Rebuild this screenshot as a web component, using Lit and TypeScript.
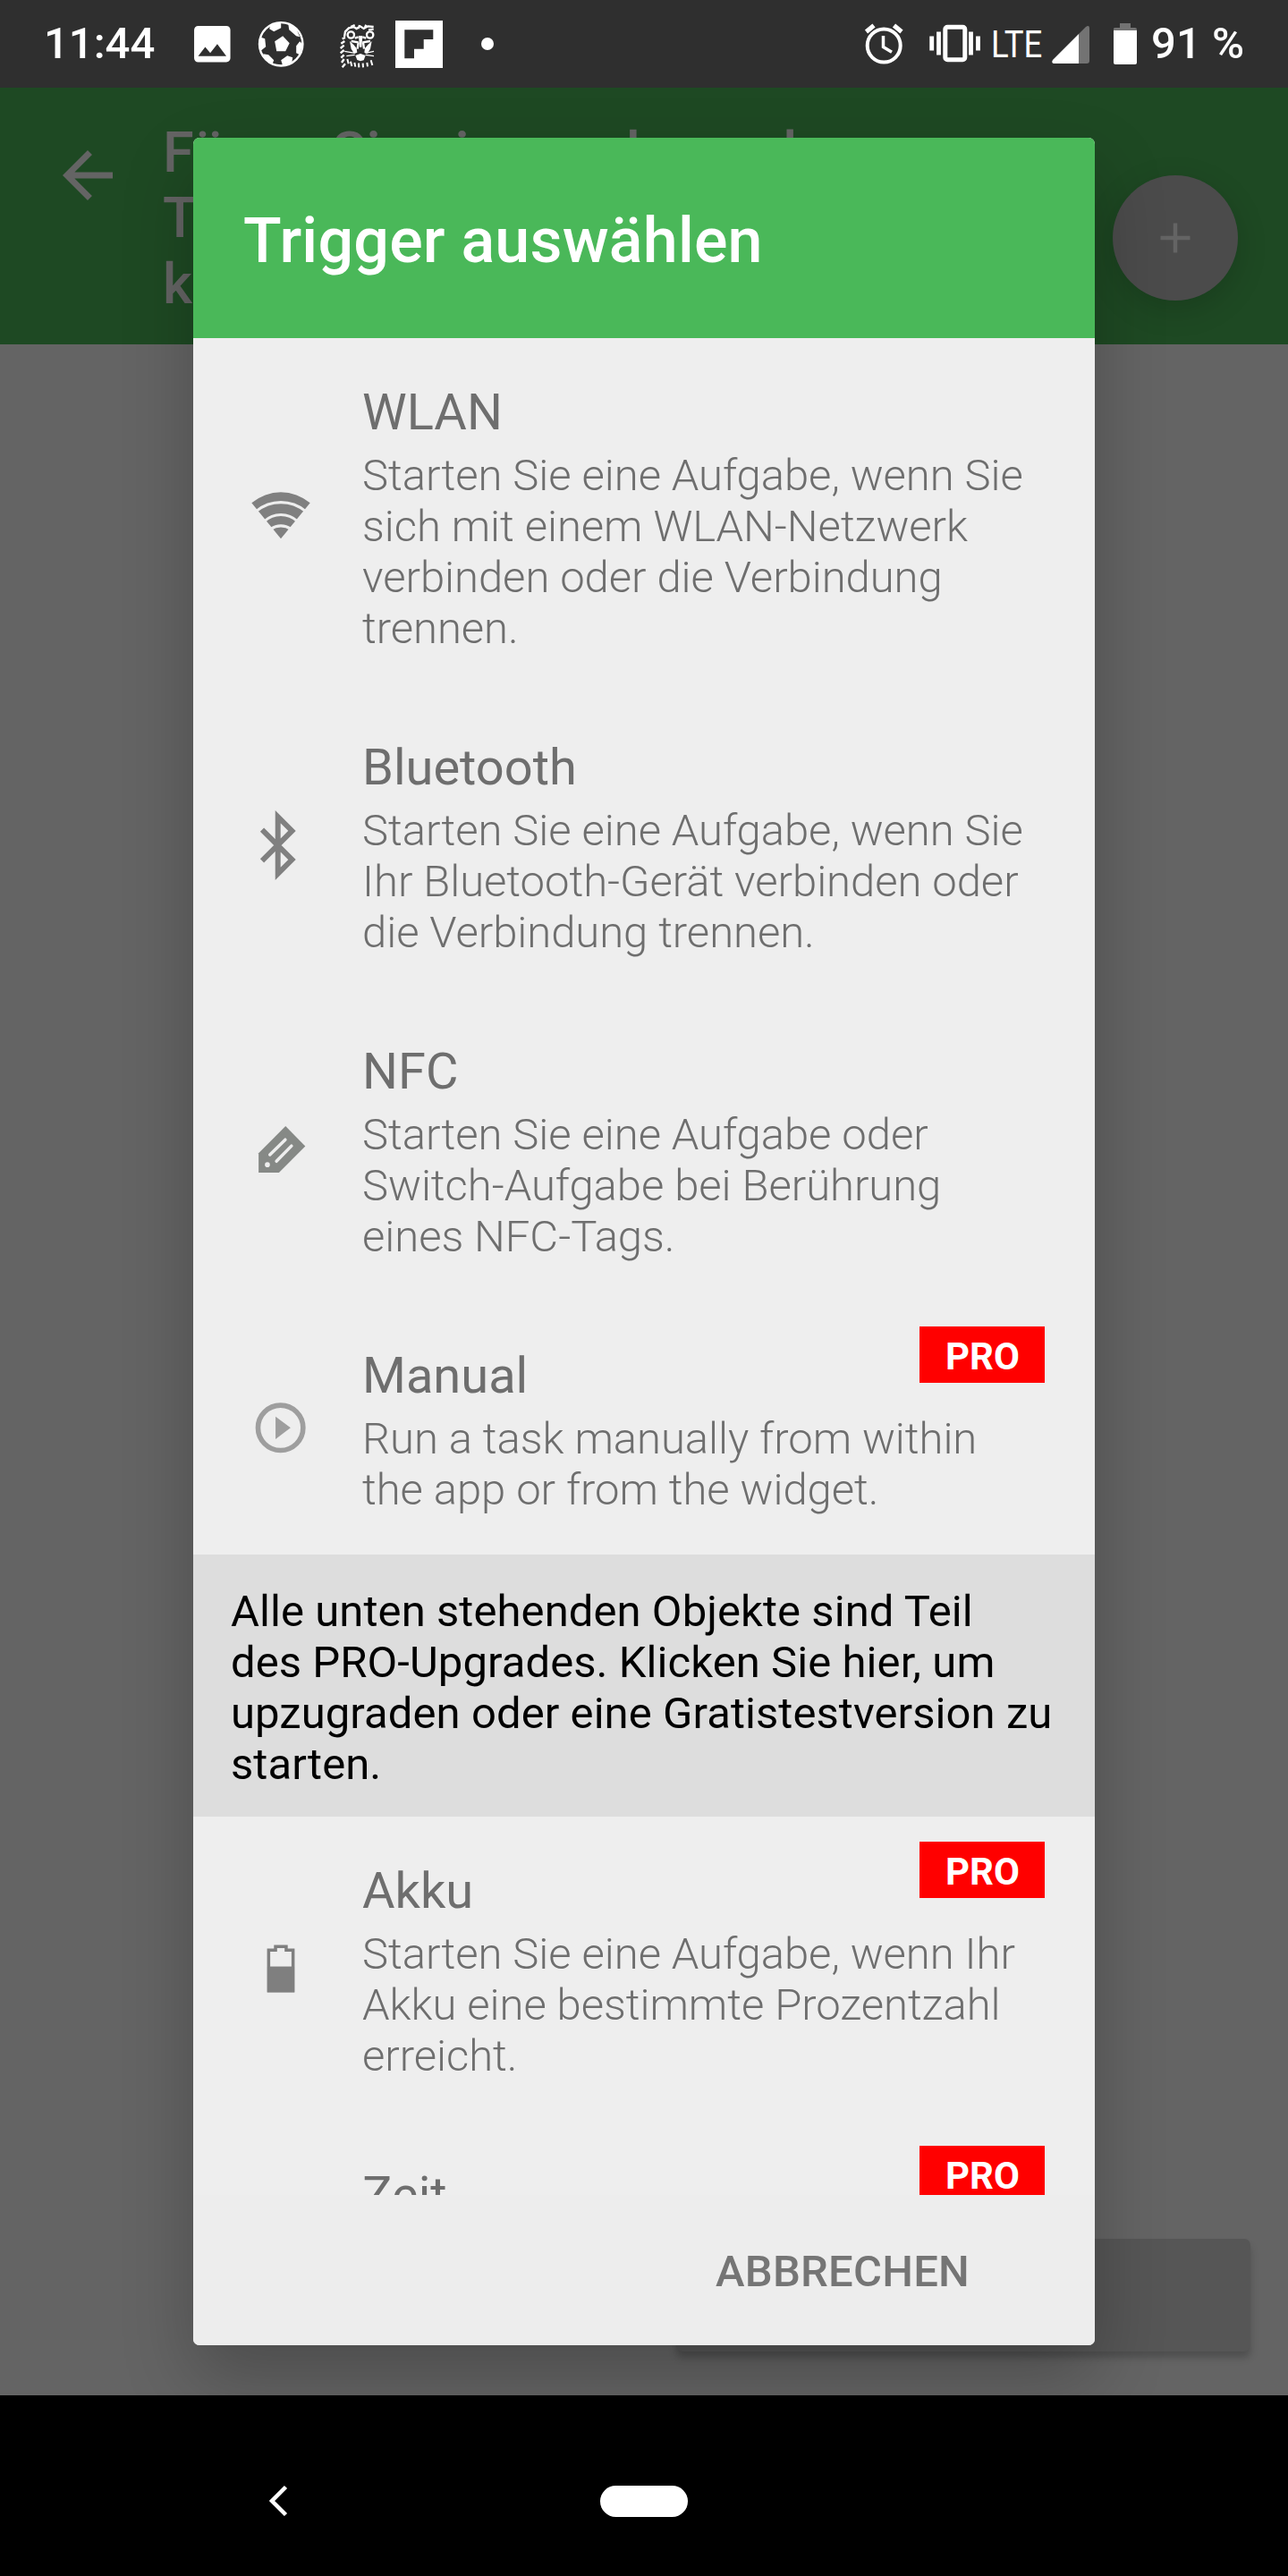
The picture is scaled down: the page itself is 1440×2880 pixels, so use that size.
import { LitElement, html, svg, css, nothing } from 'lit';
import { customElement, property } from 'lit/decorators.js';

const icons = {
  wifi: svg`
    <path d="M12 19.2 L2.66 7.8 A14.5 14.5 0 0 1 21.34 7.8 Z" fill="#808080"/>
    <g fill="none" stroke="#eee" stroke-width=".9">
      <path d="M4.2 10.4 A12.3 12.3 0 0 1 19.8 10.4"/>
      <path d="M6.7 13.7 A7.7 7.7 0 0 1 17.3 13.7"/>
      <path d="M8.8 16.1 A5.6 5.6 0 0 1 15.2 16.1"/>
    </g>`,
  bluetooth: svg`<path d="M6 7.03 L15.57 16.6 L11.06 21.1 V2.9 L15.57 7.4 L6 16.97" fill="none" stroke="#808080" stroke-width="1.7"/>`,
  nfc: svg`
    <path d="M4.9 19.4 V13.2 L13.5 4.6 L19.8 11 L11.4 19.4 Z" fill="#868986"/>
    <path d="M8.5 13.7 L13.4 8.9 M10.6 15.8 L15.4 10.9" stroke="#eee" stroke-width="1" stroke-linecap="round"/>
    <circle cx="7.7" cy="16.9" r=".8" fill="#eee"/>`,
  play: svg`
    <circle cx="11.9" cy="11.8" r="7.2" fill="none" stroke="#9e9e9e" stroke-width="1.6"/>
    <path d="M10.3 8.2 V15.400 L15.1 11.800 Z" fill="#9e9e9e"/>`,
  battery: svg`
    <path d="M8.1 6.1 H10.3 V4.9 H13.7 V6.1 H15.9 V19.1 H8.1 Z" fill="none" stroke="#7f7f7f" stroke-width="1"/>
    <path d="M7.7 11.300 H16.300 V19.500 H7.700 Z" fill="#7f7f7f"/>`,
};

type IconName = keyof typeof icons;

interface Trigger {
  icon?: IconName;
  name: string;
  lines: string[];
  pro?: boolean;
}

const freeTriggers: Trigger[] = [
  {
    icon: 'wifi',
    name: 'WLAN',
    lines: ['Starten Sie eine Aufgabe, wenn Sie', 'sich mit einem WLAN-Netzwerk', 'verbinden oder die Verbindung', 'trennen.'],
  },
  {
    icon: 'bluetooth',
    name: 'Bluetooth',
    lines: ['Starten Sie eine Aufgabe, wenn Sie', 'Ihr Bluetooth-Gerät verbinden oder', 'die Verbindung trennen.'],
  },
  {
    icon: 'nfc',
    name: 'NFC',
    lines: ['Starten Sie eine Aufgabe oder', 'Switch-Aufgabe bei Berührung', 'eines NFC-Tags.'],
  },
  {
    icon: 'play',
    name: 'Manual',
    lines: ['Run a task manually from within', 'the app or from the widget.'],
    pro: true,
  },
];

const proTriggers: Trigger[] = [
  {
    icon: 'battery',
    name: 'Akku',
    lines: ['Starten Sie eine Aufgabe, wenn Ihr', 'Akku eine bestimmte Prozentzahl', 'erreicht.'],
    pro: true,
  },
  { name: 'Zeit', lines: [], pro: true },
];

@customElement('trigger-row')
export class TriggerRow extends LitElement {
  @property({ attribute: false }) trigger!: Trigger;

  static styles = css`
    :host {
      display: grid;
      grid-template-columns: 189px 1fr;
      align-items: center;
      position: relative;
      color: #6e6e6e;
    }

    .icon {
      width: 84px;
      height: 84px;
      margin-left: 56px;
    }

    .text {
      grid-column: 2;
      padding: 50px 0 44px;
    }

    .name {
      font-size: 56px;
      line-height: 66px;
    }

    .desc {
      margin-top: 9px;
      font-size: 49px;
      font-weight: 300;
      line-height: 57px;
      letter-spacing: -0.05px;
      white-space: nowrap;
    }

    .badge {
      position: absolute;
      top: 28px;
      right: 56px;
      width: 140px;
      height: 63px;
      box-sizing: border-box;
      padding-left: 1px;
      background: #f00;
      color: #fff;
      font-size: 42px;
      font-weight: 700;
      line-height: 67px;
      text-align: center;
    }
  `;

  render() {
    const { icon, name, lines, pro } = this.trigger;
    return html`
      ${icon ? html`<svg class="icon" viewBox="0 0 24 24">${icons[icon]}</svg>` : nothing}
      <div class="text">
        <div class="name">${name}</div>
        <div class="desc">${lines.map((line) => html`<div>${line}</div>`)}</div>
      </div>
      ${pro ? html`<div class="badge">PRO</div>` : nothing}
    `;
  }
}

@customElement('status-bar')
export class StatusBar extends LitElement {
  static styles = css`
    :host {
      display: flex;
      align-items: center;
      justify-content: space-between;
      height: 98px;
      box-sizing: border-box;
      padding: 0 49px;
      background: #2f2f2f;
      color: #fff;
      font-size: 49px;
      font-weight: 500;
      line-height: 100px;
    }

    .side {
      display: flex;
      align-items: center;
      height: 98px;
      white-space: pre;
    }

    .side svg {
      display: block;
      flex: none;
    }

    .clock {
      width: 161px;
    }

    .network {
      width: 67px;
      font-size: 43px;
      font-weight: 400;
      transform: scaleX(0.85);
      transform-origin: left;
      line-height: 95px;
    }
  `;

  render() {
    return html`
      <div class="side">
        <span class="clock">11:44</span>
        <svg width="288" height="60" viewBox="210 19 288 60">
          <path transform="translate(210.3 22.2) scale(2.25)" fill="#fff" d="M21 19V5c0-1.1-.9-2-2-2H5c-1.1 0-2 .9-2 2v14c0 1.1.9 2 2 2h14c1.1 0 2-.9 2-2zM8.5 13.5l2.5 3.01L14.5 12l4.5 6H5l3.5-4.5z"/>
          <g transform="translate(314.2 49.3)">
            <circle r="24.2" fill="none" stroke="#fff" stroke-width="2.4"/>
            <path fill="#fff" d="M-7 -3 L2 -9 L9.5 -1 L5 8 L-5 8 Z"/>
            <path fill="#fff" d="M-12 -22 L0 -24 L0 -18 L-8 -14 L-13 -17 Z M8 -23 L17 -17 L21 -8 L17 -9 L9 -16 Z M24 0 L21 12 L17 10 L17 2 L21 -3 Z M12 21 L2 24.5 L0 18 L7 13 L13 15 Z M-10 23 L-19 15 L-20 11 L-14 12 L-8 18 Z M-24 -8 L-18 -6 L-17 3 L-22 7 L-25 2 Z"/>
          </g>
          <g transform="translate(350 10) scale(.3333)" fill="none" stroke="#fff" stroke-width="7">
            <path d="M105 94 L108 76 L120 64 L136 60 L146 66 L158 58 L170 66 L184 58 L203 60 M126 60 L140 54 M152 66 L156 54 M174 62 L178 53 M186 70 L203 68"/>
            <circle cx="127" cy="87" r="11"/>
            <circle cx="191" cy="87" r="11"/>
            <path d="M98 100 L108 96 M94 116 L106 108 M92 132 L104 122 M92 148 L104 138 M94 164 L104 154 M96 180 L104 168 M98 196 L108 184"/>
            <path d="M140 98 L152 94 M166 94 L178 98 M128 108 L152 112 M166 112 L192 108 M152 112 L149 134 M168 112 L171 134"/>
            <path d="M106 142 L140 148 M112 158 L140 154 M204 142 L176 148 M204 158 L176 154" stroke-width="4"/>
            <path fill="#fff" stroke="none" d="M123 108 L136 120 L146 132 L148 146 L138 150 L128 134 Z M197 108 L184 120 L174 132 L172 146 L182 150 L192 134 Z M153 90 L166 90 L163 128 L156 128 Z M142 156 L159 150 L176 156 L170 172 L159 175 L148 171 Z"/>
            <path d="M115 168 L119 184 M126 176 L130 192 M139 180 L142 194 M153 182 L154 196 M167 182 L168 196 M181 180 L183 193 M194 172 L199 189" stroke-width="6"/>
          </g>
          <path d="M442 23 H495 V76 H442 Z" fill="#fff"/>
          <path d="M452.3 33.3 H484.3 V44 H473.7 V54.7 H463 V65.3 H452.3 Z" fill="#2f2f2f"/>
        </svg>
        <svg width="67" height="60" viewBox="0 0 67 60"><circle cx="47" cy="30" r="7" fill="#fff"/></svg>
      </div>
      <div class="side">
        <svg width="145" height="60" viewBox="963 19 145 60" fill="none" stroke="#fff">
          <circle cx="988.2" cy="51" r="18.5" stroke-width="4"/>
          <path d="M968.5 35.500 L977 28.5 M1008 35.5 L999.500 28.5" stroke-width="5"/>
          <path d="M987.5 40 V52.5 L997 58.300" stroke-width="3.5"/>
          <rect x="1056.8" y="30.3" width="22" height="36.500" rx="2.5" stroke-width="5"/>
          <path d="M1049.5 35.500 V61.500 M1085.5 35.500 V61.500 M1041.7 40.5 V56.5 M1093.5 40.5 V56.5" stroke-width="4.8"/>
        </svg>
        <span class="network">LTE</span>
        <svg width="112" height="60" viewBox="1175 19 112 60">
          <path d="M1206 38 L1214 30 Q1218 27 1218 32 V68 Q1218 71 1215 71 H1206 Z" fill="#737373"/>
          <path d="M1206 38 V71 H1178 Q1175 70 1177 67 Z" fill="#fff"/>
          <path d="M1245 35 V32 Q1245 31 1247 31 H1252 V26 H1264 V31 H1269 Q1271 31 1271 33 V35 Z" fill="#737373"/>
          <path d="M1245 34 H1271 V70 Q1271 72 1269 72 H1247 Q1245 72 1245 70 Z" fill="#fff"/>
        </svg>
        <span>91 %</span>
      </div>
    `;
  }
}

@customElement('app-root')
export class AppRoot extends LitElement {
  static styles = css`
    :host {
      display: flex;
      flex-direction: column;
      position: relative;
      width: 1440px;
      height: 2880px;
      overflow: hidden;
      background: #646464;
      font-family: Roboto, sans-serif;
    }

    .toolbar {
      display: flex;
      align-items: flex-start;
      height: 287px;
      box-sizing: border-box;
      padding: 0 56px;
      background: #1e4923;
      color: #646464;
    }

    .back {
      width: 84px;
      height: 84px;
      margin-top: 56px;
    }

    .heading {
      flex: 1;
      margin: 36px 0 0 42px;
      font-size: 63px;
      font-weight: 500;
      line-height: 73.3px;
      white-space: nowrap;
    }

    .fab {
      width: 140px;
      height: 140px;
      margin-top: 98px;
      border-radius: 50%;
      background: #4b4b4b;
      box-shadow: 0 10px 34px rgba(0, 0, 0, 0.16);
    }

    .content {
      flex: 1;
      display: flex;
      align-items: flex-end;
      justify-content: flex-end;
      overflow: hidden;
      padding: 0 42px 49px 0;
    }

    .next {
      width: 642px;
      height: 126px;
      border-radius: 7px;
      background: #565656;
      box-shadow: 0 7px 9px rgba(0, 0, 0, 0.22);
    }

    .navbar {
      display: grid;
      grid-template-columns: 1fr auto 1fr;
      align-items: center;
      height: 202px;
      box-sizing: border-box;
      padding-top: 34px;
      background: #000;
      z-index: 1;
    }

    .navbar svg {
      margin-left: 296px;
    }

    .home {
      width: 98px;
      height: 35px;
      border-radius: 18px;
      background: #fff;
    }

    .dialog {
      position: absolute;
      top: 154px;
      left: 216px;
      display: flex;
      flex-direction: column;
      width: 1008px;
      height: 2468px;
      overflow: hidden;
      border-radius: 7px;
      background: #eee;
    }

    .shadow {
      position: absolute;
      top: 154px;
      left: 216px;
      width: 1008px;
      height: 2468px;
      border-radius: 7px;
      box-shadow: 0 36px 80px rgba(0, 0, 0, 0.24);
    }

    .title {
      flex: none;
      height: 224px;
      box-sizing: border-box;
      padding: 0 56px;
      background: #4ab859;
      color: #fff;
      font-size: 70px;
      font-weight: 500;
      line-height: 230px;
      letter-spacing: 0.2px;
    }

    .list {
      flex: 1;
      min-height: 0;
      overflow: hidden;
    }

    .upgrade {
      height: 293px;
      box-sizing: border-box;
      padding: 35px 42px;
      background: #ddd;
      color: #000;
      font-size: 49px;
      line-height: 57px;
      letter-spacing: 0.07px;
      white-space: nowrap;
    }

    .actions {
      flex: none;
      display: flex;
      align-items: center;
      justify-content: flex-end;
      height: 168px;
      box-sizing: border-box;
      padding: 3px 140px 0 0;
      background: #ededed;
      color: #757575;
      font-size: 49px;
      font-weight: 500;
      letter-spacing: 0.2px;
    }
  `;

  render() {
    return html`
      <status-bar></status-bar>
      <div class="toolbar">
        <svg class="back" viewBox="0 0 24 24" fill="#646464">
          <path d="M20 11H7.83l5.59-5.59L12 4l-8 8 8 8 1.41-1.41L7.83 13H20v-2z"/>
        </svg>
        <div class="heading">Fügen Sie einen oder mehrere<br>Trigger hinzu, um sie zu<br>kombinieren</div>
        <svg class="fab" viewBox="0 0 140 140">
          <path d="M53.5 70 H86.5 M70 53.5 V86.5" stroke="#646464" stroke-width="4.5"/>
        </svg>
      </div>
      <div class="content"><div class="next"></div></div>
      <div class="navbar">
        <svg width="30" height="40" viewBox="0 0 30 40">
          <path d="M23.5 4.5 L8 20 L23.5 35.5" fill="none" stroke="#fff" stroke-width="4.5"/>
        </svg>
        <div class="home"></div>
      </div>
      <div class="shadow"></div>
      <div class="dialog">
        <div class="title">Trigger auswählen</div>
        <div class="list">
          ${freeTriggers.map((t) => html`<trigger-row .trigger=${t}></trigger-row>`)}
          <div class="upgrade">
            Alle unten stehenden Objekte sind Teil<br>des PRO-Upgrades. Klicken Sie hier, um<br>upzugraden oder eine Gratistestversion zu<br>starten.
          </div>
          ${proTriggers.map((t) => html`<trigger-row .trigger=${t}></trigger-row>`)}
        </div>
        <div class="actions">ABBRECHEN</div>
      </div>
    `;
  }
}
